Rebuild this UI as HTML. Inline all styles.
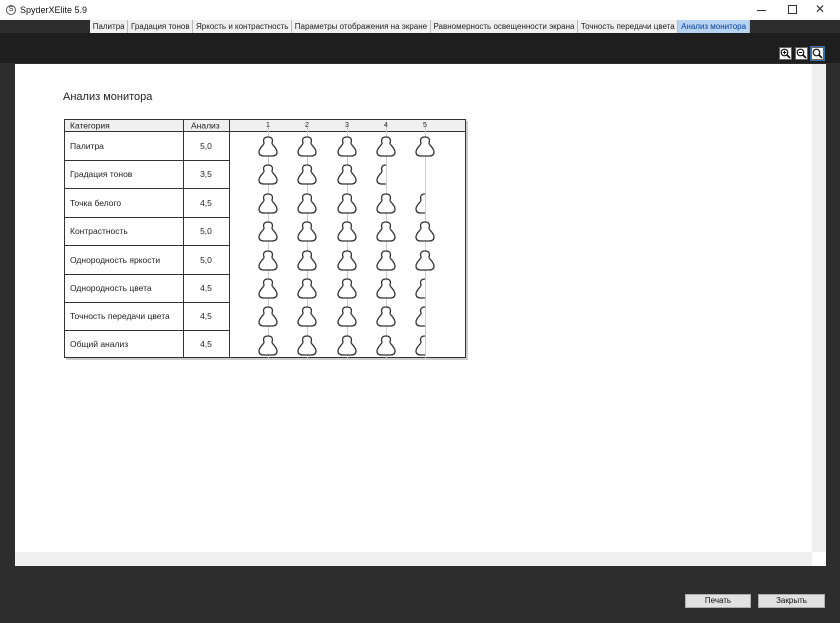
<!DOCTYPE html>
<html><head><meta charset="utf-8"><style>
*{margin:0;padding:0;box-sizing:border-box}
body{width:840px;height:623px;background:#2d2d2d;position:relative;overflow:hidden;font-family:"Liberation Sans",sans-serif}
.tb{position:absolute;left:0;top:0;width:840px;height:20px;background:#fff;font-size:9px;color:#111}
.tabs{position:absolute;top:20px;left:90px;height:13px;display:flex;font-size:8px}
.tab{background:#f0f0f0;border-right:1px solid #bbb;padding:0 2.7px;line-height:13px;color:#222;white-space:nowrap}
.tab.a{background:#b7d3f2;color:#0a3f9e}
.top{position:absolute;top:33px;left:0;width:840px;height:30px;background:#1e1e1e}
.panel{position:absolute;left:15px;top:64px;width:811px;height:502px;background:#fff}
.vs{position:absolute;right:0;top:0;width:14px;height:488px;background:#f0f0f0}
.hs{position:absolute;left:0;bottom:0;width:797px;height:14px;background:#f0f0f0}
.btn{position:absolute;top:594px;height:14px;background:#e1e1e1;border:1px solid #adadad;font-size:8px;text-align:center;line-height:12px;color:#111}
</style></head><body>
<div class="tb">
<div style="position:absolute;left:6px;top:5px;width:10px;height:10px;border:1px solid #555;border-radius:50%;font-size:7px;line-height:8px;text-align:center">S</div>
<div style="position:absolute;left:20px;top:5px">SpyderXElite 5.9</div>
<div style="position:absolute;left:757px;top:10px;width:9px;height:1px;background:#333"></div>
<div style="position:absolute;left:788px;top:5px;width:9px;height:9px;border:1px solid #333"></div>
<div style="position:absolute;left:815px;top:2px;font-size:12px;color:#333">✕</div>
</div>
<div class="top"></div>
<div class="tabs">
<div class="tab">Палитра</div><div class="tab">Градация тонов</div><div class="tab">Яркость и контрастность</div><div class="tab">Параметры отображения на экране</div><div class="tab">Равномерность освещенности экрана</div><div class="tab">Точность передачи цвета</div><div class="tab a">Анализ монитора</div>
</div>
<div class="panel">
<div style="position:absolute;left:48px;top:27px;font-size:11px;color:#222">Анализ монитора</div>
<div class="vs"></div><div class="hs"></div>
</div>
<svg style="position:absolute;left:0;top:0" width="840" height="623">
<defs>
<path id="p" d="M10,1 C5.5,1 5,4 6,7 C6.5,8.5 1,12 1,16 C1,19 3,20 6,20 L14,20 C17,20 19,19 19,16 C19,12 13.5,8.5 14,7 C15,4 14.5,1 10,1Z" fill="#fff" stroke="#333" stroke-width="1.3"/>
<clipPath id="h"><rect x="-1" y="0" width="11" height="23"/></clipPath>
<g id="z"><rect x="0.5" y="0.5" width="12" height="12" fill="#fff" stroke="#666"/><circle cx="5.5" cy="5.5" r="3.3" fill="none" stroke="#111" stroke-width="1.2"/><line x1="8" y1="8" x2="11" y2="11" stroke="#111" stroke-width="1.6"/></g>
</defs>
<use href="#z" x="779" y="47"/><line x1="3.8" y1="5.5" x2="7.2" y2="5.5" stroke="#111" transform="translate(779,47)"/><line x1="5.5" y1="3.8" x2="5.5" y2="7.2" stroke="#111" transform="translate(779,47)"/>
<use href="#z" x="795" y="47"/><line x1="3.8" y1="5.5" x2="7.2" y2="5.5" stroke="#111" transform="translate(795,47)"/>
<use href="#z" x="811" y="47"/><rect x="810.5" y="46.5" width="14" height="14" fill="none" stroke="#3a6ea5"/>
<rect x="66" y="121" width="402" height="239" fill="#999" opacity=".5"/>
<rect x="64.5" y="119.5" width="401" height="238" fill="#fff" stroke="#333"/>
<rect x="64.5" y="119.5" width="401" height="12" fill="#f0f0f0" stroke="#333"/>
<g stroke="#333"><line x1="183.5" y1="119" x2="183.5" y2="358"/><line x1="229.5" y1="119" x2="229.5" y2="358"/>
<g stroke-width="1"><line x1="64" y1="160.5" x2="229" y2="160.5"/><line x1="64" y1="188.5" x2="229" y2="188.5"/><line x1="64" y1="217.5" x2="229" y2="217.5"/><line x1="64" y1="245.5" x2="229" y2="245.5"/><line x1="64" y1="274.5" x2="229" y2="274.5"/><line x1="64" y1="302.5" x2="229" y2="302.5"/><line x1="64" y1="330.5" x2="229" y2="330.5"/></g></g>
<g stroke="#ccc"><line x1="268.5" y1="126" x2="268.5" y2="358"/><line x1="307.5" y1="126" x2="307.5" y2="358"/><line x1="347.5" y1="126" x2="347.5" y2="358"/><line x1="386.5" y1="126" x2="386.5" y2="358"/><line x1="425.5" y1="126" x2="425.5" y2="358"/></g>
<g font-size="7" fill="#222" text-anchor="middle"><text x="268" y="127">1</text><text x="307" y="127">2</text><text x="347" y="127">3</text><text x="386" y="127">4</text><text x="425" y="127">5</text></g>
<g font-size="8.5" fill="#222"><text x="70" y="128.5">Категория</text><text x="191" y="128.5">Анализ</text>
<text x="70" y="149">Палитра</text><text x="70" y="177">Градация тонов</text><text x="70" y="206">Точка белого</text><text x="70" y="234">Контрастность</text><text x="70" y="263">Однородность яркости</text><text x="70" y="291">Однородность цвета</text><text x="70" y="319">Точность передачи цвета</text><text x="70" y="347">Общий анализ</text>
<g text-anchor="middle"><text x="206" y="149">5,0</text><text x="206" y="177">3,5</text><text x="206" y="206">4,5</text><text x="206" y="234">5,0</text><text x="206" y="263">5,0</text><text x="206" y="291">4,5</text><text x="206" y="319">4,5</text><text x="206" y="347">4,5</text></g></g>
<g>
<g transform="translate(0,136)"><use href="#p" x="258"/><use href="#p" x="297"/><use href="#p" x="337"/><use href="#p" x="376"/><use href="#p" x="415"/></g>
<g transform="translate(0,164)"><use href="#p" x="258"/><use href="#p" x="297"/><use href="#p" x="337"/><g transform="translate(376,0)"><use href="#p" clip-path="url(#h)"/></g></g>
<g transform="translate(0,193)"><use href="#p" x="258"/><use href="#p" x="297"/><use href="#p" x="337"/><use href="#p" x="376"/><g transform="translate(415,0)"><use href="#p" clip-path="url(#h)"/></g></g>
<g transform="translate(0,221)"><use href="#p" x="258"/><use href="#p" x="297"/><use href="#p" x="337"/><use href="#p" x="376"/><use href="#p" x="415"/></g>
<g transform="translate(0,250)"><use href="#p" x="258"/><use href="#p" x="297"/><use href="#p" x="337"/><use href="#p" x="376"/><use href="#p" x="415"/></g>
<g transform="translate(0,278)"><use href="#p" x="258"/><use href="#p" x="297"/><use href="#p" x="337"/><use href="#p" x="376"/><g transform="translate(415,0)"><use href="#p" clip-path="url(#h)"/></g></g>
<g transform="translate(0,306)"><use href="#p" x="258"/><use href="#p" x="297"/><use href="#p" x="337"/><use href="#p" x="376"/><g transform="translate(415,0)"><use href="#p" clip-path="url(#h)"/></g></g>
<g transform="translate(0,335)"><use href="#p" x="258"/><use href="#p" x="297"/><use href="#p" x="337"/><use href="#p" x="376"/><g transform="translate(415,0)"><use href="#p" clip-path="url(#h)"/></g></g>
</g>
</svg>
<div class="btn" style="left:685px;width:66px">Печать</div>
<div class="btn" style="left:758px;width:67px">Закрыть</div>
</body></html>
